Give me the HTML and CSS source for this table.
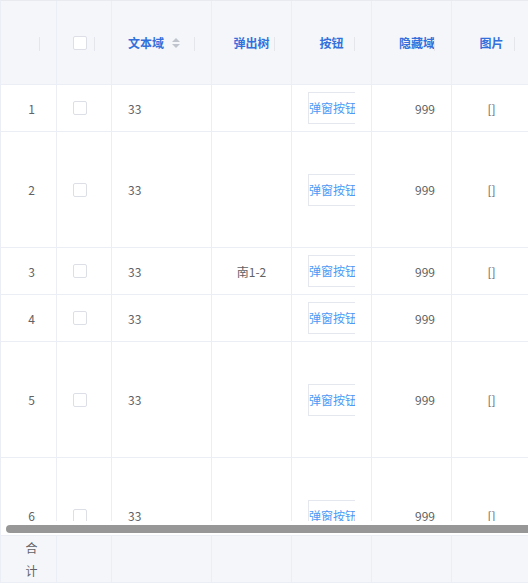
FILE: index.html
```html
<!DOCTYPE html>
<html lang="zh-CN">
<head>
<meta charset="utf-8">
<title>表格</title>
<link rel="stylesheet" href="styles.css">
</head>
<body>
<div class="table">
  <div class="grid head">
    <div class="th center"><div class="cell"></div></div>
    <div class="th"><div class="cell"><span class="checkbox"></span></div></div>
    <div class="th"><div class="cell">文本域<svg class="sort" width="8" height="12" viewBox="0 0 8 12"><path d="M0 5 L4 1 L8 5 Z" fill="#c0c4cc"/><path d="M0 7 L4 11 L8 7 Z" fill="#c0c4cc"/></svg></div></div>
    <div class="th center"><div class="cell">弹出树</div></div>
    <div class="th center"><div class="cell">按钮</div></div>
    <div class="th right"><div class="cell">隐藏域</div></div>
    <div class="th center"><div class="cell">图片</div></div>
  </div>
  <div class="body">
    <div class="grid">
      <div class="td idx"><div class="cell">1</div></div>
      <div class="td"><div class="cell"><span class="checkbox"></span></div></div>
      <div class="td"><div class="cell">33</div></div>
      <div class="td center"><div class="cell"></div></div>
      <div class="td"><div class="cell"><span class="btn">弹窗按钮</span></div></div>
      <div class="td right"><div class="cell">999</div></div>
      <div class="td center"><div class="cell">[]</div></div>

      <div class="td tall idx"><div class="cell">2</div></div>
      <div class="td tall"><div class="cell"><span class="checkbox"></span></div></div>
      <div class="td tall"><div class="cell">33</div></div>
      <div class="td tall center"><div class="cell"></div></div>
      <div class="td tall"><div class="cell"><span class="btn">弹窗按钮</span></div></div>
      <div class="td tall right"><div class="cell">999</div></div>
      <div class="td tall center"><div class="cell">[]</div></div>

      <div class="td idx"><div class="cell">3</div></div>
      <div class="td"><div class="cell"><span class="checkbox"></span></div></div>
      <div class="td"><div class="cell">33</div></div>
      <div class="td center"><div class="cell">南1-2</div></div>
      <div class="td"><div class="cell"><span class="btn">弹窗按钮</span></div></div>
      <div class="td right"><div class="cell">999</div></div>
      <div class="td center"><div class="cell">[]</div></div>

      <div class="td idx"><div class="cell">4</div></div>
      <div class="td"><div class="cell"><span class="checkbox"></span></div></div>
      <div class="td"><div class="cell">33</div></div>
      <div class="td center"><div class="cell"></div></div>
      <div class="td"><div class="cell"><span class="btn">弹窗按钮</span></div></div>
      <div class="td right"><div class="cell">999</div></div>
      <div class="td center"><div class="cell"></div></div>

      <div class="td tall idx"><div class="cell">5</div></div>
      <div class="td tall"><div class="cell"><span class="checkbox"></span></div></div>
      <div class="td tall"><div class="cell">33</div></div>
      <div class="td tall center"><div class="cell"></div></div>
      <div class="td tall"><div class="cell"><span class="btn">弹窗按钮</span></div></div>
      <div class="td tall right"><div class="cell">999</div></div>
      <div class="td tall center"><div class="cell">[]</div></div>

      <div class="td tall idx"><div class="cell">6</div></div>
      <div class="td tall"><div class="cell"><span class="checkbox"></span></div></div>
      <div class="td tall"><div class="cell">33</div></div>
      <div class="td tall center"><div class="cell"></div></div>
      <div class="td tall"><div class="cell"><span class="btn">弹窗按钮</span></div></div>
      <div class="td tall right"><div class="cell">999</div></div>
      <div class="td tall center"><div class="cell">[]</div></div>
    </div>
  </div>
  <div class="scrollbar"><div class="thumb"></div></div>
  <div class="grid foot">
    <div class="tf idx"><div class="cell"><span class="sum">合计</span></div></div>
    <div class="tf"><div class="cell"></div></div>
    <div class="tf"><div class="cell"></div></div>
    <div class="tf"><div class="cell"></div></div>
    <div class="tf"><div class="cell"></div></div>
    <div class="tf"><div class="cell"></div></div>
    <div class="tf"><div class="cell"></div></div>
  </div>
</div>
</body>
</html>
```
FILE: styles.css
```css
html, body {
  margin: 0;
  padding: 0;
  overflow: hidden;
  background: #ffffff;
}
body {
  font-family: "Noto Sans CJK SC", "Noto Sans", sans-serif;
  font-size: 12px;
  color: #606266;
}
.table {
  width: 528px;
  overflow: hidden;
  border-left: 1px solid #ebeef5;
  border-top: 1px solid #e8eaf0;
  box-sizing: border-box;
}
.grid {
  display: grid;
  grid-template-columns: 56px 55px 100px 80px 80px 80px 80px;
  width: 531px;
}
.th, .td, .tf {
  box-sizing: border-box;
  border-right: 1px solid #ebeef5;
  border-bottom: 1px solid #ebeef5;
  display: flex;
  align-items: center;
  padding: 0 16px;
  position: relative;
}
.th {
  height: 84px;
  background: #f5f6fa;
  color: #3370db;
  font-weight: bold;
}
.th::after {
  content: "";
  position: absolute;
  right: 16px;
  top: 36px;
  width: 1px;
  height: 14px;
  background: #e4e6ec;
}
.cell {
  flex: 1;
  overflow: hidden;
  white-space: nowrap;
  display: flex;
  align-items: center;
  line-height: 23px;
}
.center .cell { justify-content: center; }
.right .cell { justify-content: flex-end; }
.idx { padding: 0 10px 0 16px; }
.idx .cell { justify-content: center; }
.sort { margin-left: 8px; }
.checkbox {
  display: inline-block;
  width: 14px;
  height: 14px;
  box-sizing: border-box;
  border: 1px solid #dcdfe6;
  border-radius: 2px;
  background: #ffffff;
}
.body {
  height: 436px;
  overflow: hidden;
}
.td {
  height: 47px;
  background: #ffffff;
}
.td.tall { height: 116px; }
.btn {
  display: inline-block;
  box-sizing: border-box;
  height: 32px;
  line-height: 30px;
  padding: 0;
  border: 1px solid #e4e7ed;
  color: #4a9bf5;
  background: #ffffff;
  white-space: nowrap;
  min-width: 60px;
}
.scrollbar {
  height: 14px;
  background: #ffffff;
  overflow: hidden;
}
.thumb {
  margin: 4px 0 0 5px;
  width: 560px;
  height: 8px;
  border-radius: 4px;
  background: #979797;
}
.foot {
  border-top: 1px solid #ebeef5;
}
.tf {
  height: 47px;
  background: #f5f6fa;
}
.sum {
  display: inline-block;
  width: 12px;
  white-space: normal;
  text-align: center;
  line-height: 23px;
}
```
